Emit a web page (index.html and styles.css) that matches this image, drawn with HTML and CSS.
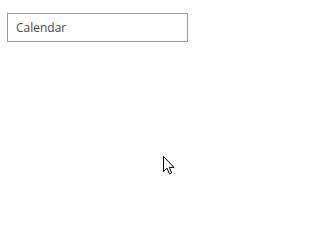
FILE: index.html
```html
<!DOCTYPE html>
<html>
<head>
<meta charset="utf-8">
<link rel="stylesheet" href="styles.css">
</head>
<body>
<div class="page">
  <div class="field"><span class="label">Calendar</span></div>
</div>
<svg class="cursor" width="12" height="19" viewBox="0 0 12 19">
  <path d="M0.5 0.5 L0.5 15.5 L4 12.2 L6.4 17.8 L8.6 16.9 L6.3 11.4 L11 11.4 Z" fill="#fff" stroke="#000" stroke-width="1" stroke-linejoin="miter"/>
</svg>
</body>
</html>
```
FILE: styles.css
```css
html, body { margin: 0; padding: 0; background: #fff; }
body { width: 323px; height: 251px; overflow: hidden; position: relative; }
.page { padding: 13px 0 0 7px; }
.field {
  box-sizing: border-box;
  width: 181px;
  height: 29px;
  border: 1px solid #8cb92a;
  display: flex;
  align-items: center;
  padding-left: 8px;
  font-family: "Open Sans", "Noto Sans", sans-serif;
  font-size: 12px;
  color: #4a4a4a;
}
.cursor { position: absolute; left: 163px; top: 156px; }
```
